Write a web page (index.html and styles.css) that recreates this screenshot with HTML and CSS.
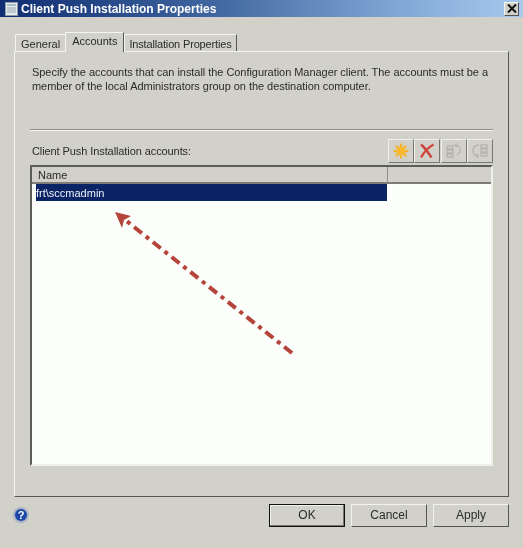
FILE: index.html
```html
<!DOCTYPE html>
<html lang="en">
<head>
  <meta charset="UTF-8" />
  <title>Client Push Installation Properties</title>
  <link rel="stylesheet" href="styles.css">
</head>
<body>

<div class="dialog">
  <div class="titlebar">
    <svg class="app-icon" width="16" height="16" viewBox="0 0 16 16">
      <rect x="2.5" y="1.5" width="12" height="13" fill="#e4ebef" stroke="#8d99a3"/>
      <rect x="4" y="3" width="9" height="2" fill="#a9bccb"/>
      <path d="M4 7h9M4 9h9M4 11h9" stroke="#9aa7b0"/>
    </svg>
    <span class="title">Client Push Installation Properties</span>
    <button class="close-btn">
      <svg width="10" height="9" viewBox="0 0 10 9"><path d="M1 0.5L9 8.5M9 0.5L1 8.5" stroke="#111" stroke-width="2"/></svg>
    </button>
  </div>

  <div class="tabs">
    <div class="tab">General</div>
    <div class="tab active">Accounts</div>
    <div class="tab install">Installation Properties</div>
  </div>

  <div class="panel">
    <p class="intro">Specify the accounts that can install the Configuration Manager client. The accounts must be a<br>member of the local Administrators group on the destination computer.</p>
    <div class="sep"></div>

    <div class="list-head">
      <span class="list-label">Client Push Installation accounts:</span>
      <div class="toolbar">
        <button class="tool">
          <svg width="18" height="18" viewBox="0 0 18 18"><path d="M9 1.5v15M1.5 9h15M3.8 3.8l10.4 10.4M14.2 3.8L3.8 14.2" stroke="#f5b335" stroke-width="2.4"/><circle cx="9" cy="9" r="4" fill="#f9b92c"/></svg>
        </button>
        <button class="tool">
          <svg width="18" height="18" viewBox="0 0 18 18"><path d="M3 2.5c4 3 7 8 10.5 13" stroke="#c8413a" stroke-width="2.4" fill="none"/><path d="M15.5 2.5C11 5 6 10 3 15.5" stroke="#d2443c" stroke-width="2.2" fill="none"/></svg>
        </button>
        <button class="tool">
          <svg width="18" height="18" viewBox="0 0 18 18" fill="none" stroke="#b5b4ae" stroke-width="1.3"><path d="M2 4h6v3H2zM2 8h6v3H2zM2 12h6v3H2z"/><path d="M10 3c4 0 6 3 5 7l-3 3M12 1.5L10 3l2 2"/></svg>
        </button>
        <button class="tool">
          <svg width="18" height="18" viewBox="0 0 18 18" fill="none" stroke="#b5b4ae" stroke-width="1.3"><path d="M10 3h6v3h-6zM10 7h6v3h-6zM10 11h6v3h-6z"/><path d="M8 3C4 3 2 5 2 9c0 3 2 5 5 5M5.5 12L7.5 14l-2 2"/></svg>
        </button>
      </div>
    </div>

    <div class="listview">
      <div class="lv-header">
        <div class="lv-col">Name</div>
        <div class="lv-rest"></div>
      </div>
      <div class="lv-row">
        <div class="lv-selected">frt\sccmadmin</div>
      </div>
    </div>
  </div>

  <div class="footer">
    <svg class="help" width="18" height="18" viewBox="0 0 18 18">
      <circle cx="9" cy="9" r="8" fill="#aab4c4"/>
      <circle cx="9" cy="9" r="6" fill="#1d48a8"/>
      <text x="9" y="13" text-anchor="middle" class="help-mark">?</text>
    </svg>
    <div class="buttons">
      <button class="btn default">OK</button>
      <button class="btn">Cancel</button>
      <button class="btn">Apply</button>
    </div>
  </div>

  <!-- annotation drawn over the screenshot -->
  <svg class="arrow" width="523" height="548" viewBox="0 0 523 548">
    <line x1="292" y1="353" x2="124" y2="219" stroke="#b5443a" stroke-width="4" stroke-dasharray="10 5 4 5"/>
    <path d="M115 212L131 216L124 220L122 228Z" fill="#b5443a"/>
  </svg>
</div>

</body>
</html>
```

FILE: styles.css
```css
html, body { margin: 0; padding: 0; }
body { font-family: "Liberation Sans", Arial, sans-serif; font-size: 11px; color: #2b2b2b; background: #d1d0c9; }
p { margin: 0; }
button { font-family: inherit; font-size: inherit; color: inherit; padding: 0; }

/* the source is a soft jpeg, a small blur brings the edges closer */
.dialog { position: relative; width: 523px; height: 548px; overflow: hidden; background: #d1d0c9; filter: blur(0.35px); }

.titlebar { display: flex; align-items: center; height: 17px; padding: 0 4px 0 3px; background: linear-gradient(90deg, #0f2d72 0%, #3f659f 40%, #7fa5d4 75%, #a7c9ee 100%); }
.app-icon { flex: none; margin-right: 2px; }
.title { flex: 1; font-weight: bold; font-size: 12px; color: #fff; white-space: nowrap; }
.close-btn { display: flex; align-items: center; justify-content: center; width: 15px; height: 14px; background: #d1d0c9; border: 1px solid; border-color: #f4f4f0 #555 #555 #f4f4f0; }

.tabs { display: flex; align-items: flex-end; height: 34px; padding-left: 15px; }
.tab { height: 16px; line-height: 18px; padding: 0 5px; border: 1px solid #f4f4f0; border-right-color: #555; border-bottom: 0; white-space: nowrap; }
.tab.active { height: 19px; line-height: 16px; padding: 0 6px; margin: 0 0 0 -1px; background: #d1d0c9; position: relative; top: 1px; }
.tab.install { padding: 0 4px; letter-spacing: -0.16px; }

.panel { width: 495px; height: 446px; margin-left: 14px; box-sizing: border-box; border: 1px solid; border-color: #f4f4f0 #55554f #55554f #f4f4f0; padding: 13px 15px 0 15px; }
.intro { padding-left: 2px; line-height: 14px; white-space: nowrap; letter-spacing: -0.045px; }
.sep { height: 1px; margin-top: 36px; background: #8f8e88; border-bottom: 1px solid #f4f4f0; }

.list-head { display: flex; justify-content: space-between; align-items: center; height: 26px; margin-top: 7px; padding-left: 2px; }
.list-label { letter-spacing: -0.09px; }
.toolbar { display: flex; gap: 0.33px; }
.tool { display: flex; align-items: center; justify-content: center; width: 26px; height: 24px; background: #d1d0c9; border: 1px solid; border-color: #efefe9 #77766f #77766f #efefe9; }

.listview { height: 301px; margin-top: 1px; box-sizing: border-box; border: 2px solid; border-color: #5d5d58 #f0f0ea #f0f0ea #5d5d58; background: #fbfefb; }
.lv-header { display: flex; height: 15px; background: #d1d0c9; border-bottom: 2px solid #7d7c76; line-height: 16px; }
.lv-col { width: 349px; padding-left: 6px; border-right: 1px solid #8f8e88; }
.lv-rest { flex: 1; }
.lv-row { padding-left: 4px; }
.lv-selected { width: 351px; height: 17px; line-height: 18px; background: #0b2466; color: #eef2fa; }

.footer { display: flex; justify-content: space-between; align-items: center; height: 32px; padding: 2px 14px 0 12px; }
.help-mark { font-family: "Liberation Sans", Arial, sans-serif; font-size: 11px; font-weight: bold; fill: #fff; }
.buttons { display: flex; gap: 6px; }
.btn { width: 76px; height: 23px; font-size: 12px; background: #d1d0c9; border: 1px solid; border-color: #f2f2ec #55554f #55554f #f2f2ec; }
.btn.default { border: 1px solid #111; box-shadow: inset -1px -1px 0 #77766f, inset 1px 1px 0 #f2f2ec; }

.arrow { position: absolute; left: 0; top: 0; pointer-events: none; }
```
